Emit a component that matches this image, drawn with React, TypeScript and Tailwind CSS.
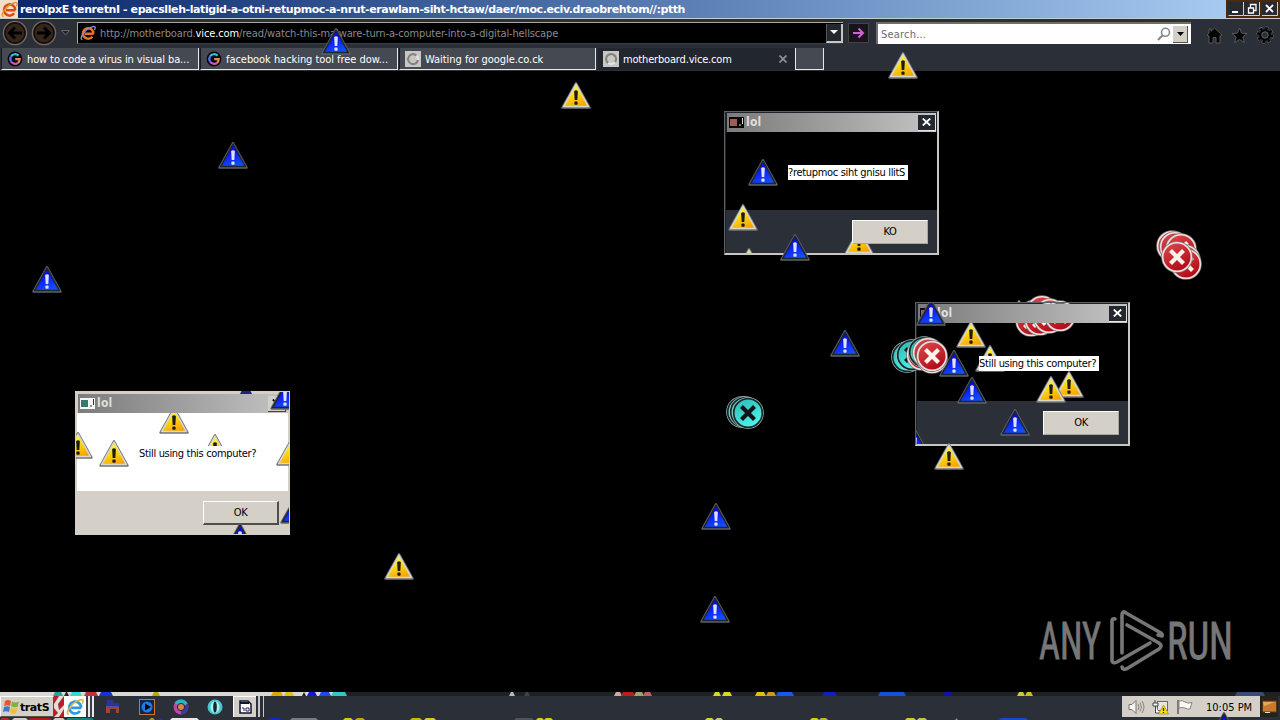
import { useId, type ReactNode } from 'react';
import clsx from 'clsx';

type IconKind = 'yellow' | 'blue' | 'red' | 'teal';
type Spot = { kind: IconKind; x: number; y: number };
type Tip = { x: number; w: number; color: string };

const triangleColors = {
    yellow: { from: '#fff21a', to: '#f7a400', edge: '#dad8c8', outer: '#77767a', mark: '#1c190d' },
    blue: { from: '#0808f8', to: '#1450fa', edge: '#20262f', outer: '#5c6069', mark: '#dfe3ff' },
};

const discColors = {
    red: { from: '#e04b50', to: '#b10d18', edge: '#f2dede', outer: '#777', mark: '#fdf3ea' },
    teal: { from: '#2cb4b0', to: '#4cf2e8', edge: '#152424', outer: '#a2b9b9', mark: '#101418' },
};

// Icons are placed by their center point
function StrayIcon({ kind, x, y }: Spot) {
    const id = useId();
    if (kind === 'yellow' || kind === 'blue') {
        const c = triangleColors[kind];
        return (
            <svg className="absolute" style={{ left: x - 15, top: y - 13 }} width="30" height="28" viewBox="0 0 30 28">
                <defs>
                    <linearGradient id={id} x1="0.3" y1="0.25" x2="0.6" y2="1">
                        <stop offset="0" stopColor={c.from} />
                        <stop offset="1" stopColor={c.to} />
                    </linearGradient>
                </defs>
                <path d="M15 1.3 L28.5 25.6 H1.5 Z" fill={c.outer} stroke={c.outer} strokeWidth="2.4" strokeLinejoin="round" />
                <path d="M15 2.2 L27.4 24.6 H2.6 Z" fill={`url(#${id})`} stroke={c.edge} strokeWidth="1.5" strokeLinejoin="round" />
                <path d="M13.1 9 Q15 7.6 16.9 9 L16.3 18 H13.7 Z" fill={c.mark} />
                <rect x="13.4" y="19.6" width="3.2" height="3.2" rx="0.8" fill={c.mark} />
            </svg>
        );
    }
    const c = discColors[kind];
    return (
        <svg className="absolute" style={{ left: x - 16, top: y - 17 }} width="32" height="34" viewBox="0 0 32 34">
            <defs>
                <linearGradient id={id} x1="0" y1="0" x2="0.5" y2="1">
                    <stop offset="0" stopColor={c.from} />
                    <stop offset="1" stopColor={c.to} />
                </linearGradient>
            </defs>
            <circle cx="16" cy="17" r="15.8" fill={c.outer} />
            <circle cx="16" cy="17" r="14.3" fill={`url(#${id})`} stroke={c.edge} strokeWidth="1.6" />
            <path d="M9.5 10.5 L22.5 23.5 M22.5 10.5 L9.5 23.5" stroke={c.mark} strokeWidth="4.2" />
        </svg>
    );
}

function Icons({ spots }: { spots: Spot[] }) {
    return (
        <>
            {spots.map((s, i) => (
                <StrayIcon key={i} {...s} />
            ))}
        </>
    );
}

const desktopIcons: Spot[] = [
    { kind: 'yellow', x: 576, y: 95 },
    { kind: 'yellow', x: 903, y: 65 },
    { kind: 'yellow', x: 399, y: 566 },
    { kind: 'blue', x: 336, y: 41 },
    { kind: 'blue', x: 233, y: 155 },
    { kind: 'blue', x: 47, y: 279 },
    { kind: 'blue', x: 845, y: 343 },
    { kind: 'blue', x: 716, y: 516 },
    { kind: 'blue', x: 715, y: 609 },
    { kind: 'yellow', x: 1019, y: 313 },
    { kind: 'red', x: 1035, y: 315 },
    { kind: 'red', x: 1042, y: 311 },
    { kind: 'red', x: 1050, y: 314 },
    { kind: 'red', x: 1060, y: 316 },
];

const topIcons: Spot[] = [
    { kind: 'blue', x: 795, y: 247 },
    { kind: 'yellow', x: 949, y: 456 },
    { kind: 'teal', x: 907, y: 357 },
    { kind: 'teal', x: 912, y: 355 },
    { kind: 'red', x: 922, y: 355 },
    { kind: 'teal', x: 924, y: 352 },
    { kind: 'red', x: 928, y: 353 },
    { kind: 'red', x: 932, y: 358 },
    { kind: 'red', x: 932, y: 356 },
    { kind: 'teal', x: 742, y: 412 },
    { kind: 'teal', x: 745, y: 412 },
    { kind: 'teal', x: 748, y: 413 },
    { kind: 'red', x: 1172, y: 246 },
    { kind: 'red', x: 1175, y: 247 },
    { kind: 'red', x: 1181, y: 249 },
    { kind: 'red', x: 1185, y: 260 },
    { kind: 'red', x: 1186, y: 264 },
    { kind: 'red', x: 1177, y: 257 },
];

// Only slivers of the icons show above and below the taskbar
const taskbarTopTips: Tip[] = [
    { x: 53, w: 10, color: '#22a5a0' },
    { x: 64, w: 5, color: '#1c2c2c' },
    { x: 70, w: 12, color: '#38d8d0' },
    { x: 84, w: 14, color: '#bd3338' },
    { x: 99, w: 14, color: '#1532d8' },
    { x: 152, w: 8, color: '#b8a410' },
    { x: 271, w: 12, color: '#d8a808' },
    { x: 284, w: 10, color: '#e0c010' },
    { x: 302, w: 4, color: '#202020' },
    { x: 307, w: 10, color: '#1018d8' },
    { x: 319, w: 12, color: '#2048f0' },
    { x: 331, w: 16, color: '#32c8c4' },
    { x: 509, w: 6, color: '#b8b8b0' },
    { x: 524, w: 6, color: '#41424a' },
    { x: 614, w: 8, color: '#c9aaa4' },
    { x: 621, w: 14, color: '#b82020' },
    { x: 634, w: 10, color: '#a8a068' },
    { x: 643, w: 9, color: '#c06058' },
    { x: 713, w: 8, color: '#d8d820' },
    { x: 722, w: 10, color: '#d8d820' },
    { x: 755, w: 11, color: '#e0c000' },
    { x: 766, w: 10, color: '#d09820' },
    { x: 776, w: 18, color: '#1858f0' },
    { x: 822, w: 15, color: '#1020c0' },
    { x: 878, w: 28, color: '#1450d8' },
    { x: 943, w: 10, color: '#1010b8' },
    { x: 1017, w: 8, color: '#d0c838' },
    { x: 1025, w: 8, color: '#c8c020' },
    { x: 1235, w: 30, color: '#3b4c74' },
];

const taskbarBottomTips: Tip[] = [
    { x: 0, w: 10, color: '#b82830' },
    { x: 12, w: 16, color: '#d8c8c4' },
    { x: 28, w: 24, color: '#b01820' },
    { x: 53, w: 12, color: '#d8c8c4' },
    { x: 66, w: 28, color: '#18807c' },
    { x: 149, w: 6, color: '#a89820' },
    { x: 158, w: 5, color: '#2828a0' },
    { x: 170, w: 29, color: '#e8e8e8' },
    { x: 268, w: 14, color: '#1028c8' },
    { x: 290, w: 28, color: '#777b83' },
    { x: 343, w: 10, color: '#d8c810' },
    { x: 355, w: 10, color: '#c8a010' },
    { x: 410, w: 12, color: '#d8b000' },
    { x: 424, w: 12, color: '#d8c820' },
    { x: 514, w: 20, color: '#50535a' },
    { x: 536, w: 8, color: '#d8d010' },
    { x: 544, w: 9, color: '#d8d010' },
    { x: 705, w: 9, color: '#d8d030' },
    { x: 715, w: 8, color: '#c8c878' },
    { x: 810, w: 9, color: '#d8d010' },
    { x: 819, w: 9, color: '#c8b820' },
    { x: 905, w: 11, color: '#d8c828' },
    { x: 917, w: 10, color: '#c8c060' },
    { x: 955, w: 3, color: '#90939a' },
    { x: 999, w: 29, color: '#1a48c8' },
];

function TipStrip({ tips, height }: { tips: Tip[]; height: number }) {
    return (
        <svg className="absolute left-0 top-0" width="1280" height={height} viewBox={`0 0 1280 ${height}`}>
            {tips.map(t => (
                <path key={t.x} d={`M${t.x} ${height} L${t.x + 2} 0 H${t.x + t.w - 2} L${t.x + t.w} ${height} Z`} fill={t.color} />
            ))}
        </svg>
    );
}

function InternetExplorerIcon({ size, color, ring }: { size: number; color: string; ring: string }) {
    return (
        <svg width={size} height={size} viewBox="0 0 16 16" fill="none">
            <path d="M13.6 8.7 H4.6 M13.4 8.7 A5.3 5.3 0 1 0 12.4 11.6" stroke={color} strokeWidth="2.4" />
            <path d="M2.4 14.6 C-1.5 14 5 3.5 13 1.6 C16 1 15.4 3.4 14.4 5" stroke={ring} strokeWidth="1.4" />
        </svg>
    );
}

function GoogleIcon() {
    return (
        <svg width="16" height="16" viewBox="0 0 16 16" fill="none" className="shrink-0">
            <circle cx="8" cy="8" r="7.4" fill="#06070b" />
            <path d="M11.5 4.6 A4.8 4.8 0 0 0 4 5.5" stroke="#26c5e8" strokeWidth="2.2" />
            <path d="M4 5.5 A4.8 4.8 0 0 0 4 10.5" stroke="#4f73ff" strokeWidth="2.2" />
            <path d="M4 10.5 A4.8 4.8 0 0 0 11 11.8" stroke="#cf52cb" strokeWidth="2.2" />
            <path d="M11 11.8 A4.8 4.8 0 0 0 12.7 8.2 H8.2" stroke="#e8855f" strokeWidth="2.2" />
        </svg>
    );
}

function SpinnerIcon({ full }: { full?: boolean }) {
    return (
        <svg width="16" height="16" viewBox="0 0 16 16" fill="none" className="shrink-0">
            <rect width="16" height="16" fill="#c9c7c3" />
            <circle cx="8" cy="8" r="5" stroke="#e8e6e2" strokeWidth="2" />
            <path d={full ? 'M5 12 A5 5 0 1 1 12 11' : 'M11.5 4.5 A5 5 0 1 0 13 9'} stroke="#85827f" strokeWidth="2.2" />
        </svg>
    );
}

function NavButton({ back }: { back?: boolean }) {
    return (
        <svg width="26" height="26" viewBox="0 0 26 26" fill="none">
            <circle cx="13" cy="13" r="11.6" fill="#1b1512" stroke="#74675e" strokeWidth="1.4" />
            <circle cx="13" cy="13" r="9.8" fill="#35261d" stroke="#100c0a" />
            <path
                d={back ? 'M20 13 H8 M13 7.5 L7.5 13 L13 18.5' : 'M6 13 H18 M13 7.5 L18.5 13 L13 18.5'}
                stroke="#000"
                strokeWidth="3"
            />
        </svg>
    );
}

function TitleBar() {
    return (
        <div className="h-[19px] flex items-center shrink-0 border-b border-[#c8cbd0] bg-linear-to-r from-[#0a246a] to-[#a6caf0] to-[96%]">
            <div className="w-[18px] h-[18px] bg-[#f0dfc6] flex items-center justify-center">
                <InternetExplorerIcon size={17} color="#d84c10" ring="#e8952c" />
            </div>
            <span className="pl-[2px] pt-px text-[11px] leading-[17px] font-bold text-white tracking-[-0.41px] whitespace-nowrap font-['DejaVu_Sans',sans-serif] [font-stretch:normal]">
                rerolpxE tenretnI - epacslleh-latigid-a-otni-retupmoc-a-nrut-erawlam-siht-hctaw/daer/moc.eciv.draobrehtom//:ptth
            </span>
            <div className="ml-auto h-[18px] w-[54px] bg-[#4a2a0c] flex items-center pl-[2px]">
                <svg width="50" height="14" viewBox="0 0 50 14" fill="none">
                    <path d="M0 0 H15 V14 H0Z M16 0 H31 V14 H16Z M34 0 H49 V14 H34Z" fill="#262a32" />
                    <path d="M0.5 13.5 H15.5 V0 M16 13.5 H31.5 V0 M34 13.5 H49.5 V0" stroke="#d4d0c8" />
                    <path d="M4 10 H10" stroke="#fff" strokeWidth="2" />
                    <path d="M20.5 6 H25.5 V11 H20.5Z M22.5 5.5 V2.5 H28 V8.5 H26" stroke="#fff" strokeWidth="1.3" />
                    <path d="M38 3 L45 10 M45 3 L38 10" stroke="#fff" strokeWidth="1.8" />
                </svg>
            </div>
        </div>
    );
}

function AddressBar() {
    return (
        <div className="h-[28px] flex items-center shrink-0">
            <div className="flex items-center pl-[2px] gap-[3px]">
                <NavButton back />
                <NavButton />
            </div>
            <svg width="9" height="6" viewBox="0 0 9 6" className="ml-1 mr-[7px]">
                <path d="M0.5 0.5 H8.5 L4.5 5 Z" fill="#20242b" stroke="#666" />
            </svg>
            <div className="w-[766px] h-[22px] bg-black border-t border-l border-[#aaa59e] border-b border-b-[#3b4047] flex items-center pl-[2px]">
                <InternetExplorerIcon size={16} color="#e87322" ring="#8a86d8" />
                <span className="pl-[4px] pt-[3px] text-[11px] text-[#8a8a8a] whitespace-nowrap tracking-[-0.13px]">
                    http://motherboard.<span className="text-white">vice.com</span>/read/watch-this-malware-turn-a-computer-into-a-digital-hellscape
                </span>
                <div className="ml-auto w-[17px] h-[19px] bg-[#23282f] border-r-2 border-b-2 border-[#c9c7c3] border-l border-l-[#555] flex items-center justify-center">
                    <svg width="8" height="4" viewBox="0 0 8 4"><path d="M0 0 H8 L4 4Z" fill="#fff" /></svg>
                </div>
            </div>
            <div className="ml-[5px] w-[21px] h-[20px] bg-[#17151b] border border-[#45433f] flex items-center justify-center">
                <svg width="13" height="12" viewBox="0 0 13 12" fill="none">
                    <path d="M1 6 H11 M6.5 1.5 L11 6 L6.5 10.5" stroke="#cf62d8" strokeWidth="2" />
                </svg>
            </div>
            <div className="ml-[7px] w-[315px] h-[22px] bg-white border-t-2 border-l-2 border-[#706e6a] flex items-center pl-[3px] pr-[3px]">
                <span className="pt-[2px] text-[11px] text-[#6d6d6d] tracking-[0.2px]">Search...</span>
                <svg width="14" height="14" viewBox="0 0 14 14" fill="none" className="ml-auto mr-[2px]">
                    <circle cx="8.5" cy="5.3" r="4" stroke="#85888c" strokeWidth="1.6" />
                    <path d="M5.6 8.2 L1 13" stroke="#85888c" strokeWidth="2" />
                </svg>
                <div className="w-[15px] h-[17px] bg-[#d4d0c8] border-r border-b border-[#55524e] flex items-center justify-center">
                    <svg width="7" height="4" viewBox="0 0 7 4"><path d="M0 0 H7 L3.5 4Z" fill="#000" /></svg>
                </div>
            </div>
            <div className="ml-[15px] flex items-center gap-[8px] pt-[4px]">
                <svg width="17" height="17" viewBox="0 0 17 17">
                    <path d="M8.5 1 L16 8 L14.8 9.2 L14 8.5 V16 H10 V10.5 H7 V16 H3 V8.5 L2.2 9.2 L1 8 L3 6 V2 H5 V4.3 Z" fill="#050505" stroke="#676767" strokeWidth="0.8" />
                </svg>
                <svg width="17" height="17" viewBox="0 0 17 17">
                    <path d="M8.5 1 L10.6 6.2 L16 6.5 L11.8 10 L13.3 15.5 L8.5 12.4 L3.7 15.5 L5.2 10 L1 6.5 L6.4 6.2 Z" fill="#050505" stroke="#676767" strokeWidth="0.8" />
                </svg>
                <svg width="18" height="18" viewBox="0 0 18 18" fill="none">
                    <circle cx="9" cy="9" r="6.6" stroke="#777" strokeWidth="4" strokeDasharray="2.9 2.28" />
                    <circle cx="9" cy="9" r="6.6" stroke="#050505" strokeWidth="3" strokeDasharray="2.6 2.58" />
                    <circle cx="9" cy="9" r="4.6" stroke="#050505" strokeWidth="2.4" />
                    <circle cx="9" cy="9" r="3.2" stroke="#777" strokeWidth="0.7" />
                </svg>
            </div>
        </div>
    );
}

function Tab({ icon, label, active, className }: { icon: ReactNode; label: string; active?: boolean; className: string }) {
    return (
        <div
            className={clsx(
                'h-[22px] flex items-center pl-[5px] pr-[8px] gap-[4px] text-[11px] text-white whitespace-nowrap',
                active ? 'bg-[#22262e]' : 'bg-[#454951] border-r border-b border-[#e8e8e8] border-l border-l-[#17191e]',
                className
            )}
        >
            {icon}
            <span className={active ? 'pt-[3px]' : 'pt-[4px]'}>{label}</span>
            {active && (
                <svg width="8" height="8" viewBox="0 0 8 8" className="ml-auto">
                    <path d="M0.5 0.5 L7.5 7.5 M7.5 0.5 L0.5 7.5" stroke="#8c8f94" strokeWidth="1.7" />
                </svg>
            )}
        </div>
    );
}

function TabBar() {
    return (
        <div className="h-[24px] flex items-start pt-px pl-px shrink-0">
            <Tab className="w-[198px] tracking-[-0.11px]" icon={<GoogleIcon />} label="how to code a virus in visual ba..." />
            <Tab className="w-[198px] ml-px tracking-[-0.05px]" icon={<GoogleIcon />} label="facebook hacking tool free dow..." />
            <Tab className="w-[197px] ml-px tracking-[-0.04px]" icon={<SpinnerIcon />} label="Waiting for google.co.ck" />
            <Tab className="w-[197px] ml-[2px] tracking-[-0.17px]" icon={<SpinnerIcon full />} label="motherboard.vice.com" active />
            <div className="w-[29px] h-[22px] bg-[#454951] border-l border-r border-b border-[#e8e8e8]" />
        </div>
    );
}

type DialogProps = {
    place: string;
    text: string;
    button: string;
    light?: boolean;
    under?: Spot[];
    over?: Spot[];
};

// Spots inside a dialog are relative to the frame and get cut off by it
function Dialog({ place, text, button, light, under = [], over = [] }: DialogProps) {
    return (
        <div
            className={clsx(
                'absolute w-[215px] h-[144px] overflow-hidden flex flex-col border pl-px',
                light ? 'bg-[#d4d0c8] border-[#d4d0c8] pt-[2px] pr-px' : 'bg-[#202329] border-[#5d6065] border-r-2 border-b-2 border-r-[#c9c7c3] border-b-[#c9c7c3] pt-px',
                place
            )}
        >
            <div className={clsx('h-[78px] mt-[19px] shrink-0', light ? 'bg-white' : 'bg-black')} />
            <div className={clsx('flex-1', light ? 'bg-[#d4d0c8]' : 'bg-[#2b2f37]')} />
            <Icons spots={under} />
            <div
                className={clsx(
                    'absolute left-[2px] right-px h-[19px] flex items-center bg-linear-to-r from-[#7c7c7c] to-[#c4c4c4] pl-[2px]',
                    light ? 'top-[2px]' : 'top-px'
                )}
            >
                <svg width="15" height="11" viewBox="0 0 15 11">
                    <rect width="15" height="11" fill={light ? '#f5f5f5' : '#080808'} />
                    <rect x="1" y="2" width="7" height="7" fill={light ? '#32796f' : '#a05b55'} />
                    <path d="M10 8 H12 M13.5 1 V7" stroke={light ? '#333' : '#ddd'} strokeWidth="1" />
                </svg>
                <span className="pl-[2px] text-[12px] leading-[19px] font-bold text-[#e0ded9] tracking-[0.2px]">lol</span>
                <div
                    className={clsx(
                        'ml-auto w-[18px] h-[16px] flex items-center justify-center border-r border-b',
                        light ? 'mr-[2px] bg-[#d4d0c8] border-[#444]' : 'bg-[#23272f] border-[#e5e5e5]'
                    )}
                >
                    <svg width="9" height="8" viewBox="0 0 9 8">
                        <path d="M0.8 0.5 L8.2 7.5 M8.2 0.5 L0.8 7.5" stroke={light ? '#000' : '#fff'} strokeWidth="1.8" />
                    </svg>
                </div>
            </div>
            <div
                className={clsx(
                    'absolute left-[63px] w-[120px] h-[15px] bg-white text-[11px] leading-[16px] text-black whitespace-nowrap tracking-[-0.32px]',
                    light ? 'top-[54px]' : 'top-[53px]'
                )}
            >
                {text}
            </div>
            <div
                className={clsx(
                    'absolute left-[127px] w-[76px] h-[24px] pt-px flex items-center justify-center bg-[#d4d0c8] border-t border-l border-white border-r border-b text-[11px] text-black tracking-[-0.3px]',
                    light ? 'top-[109px] border-r-2 border-b-2 border-r-[#504e4a] border-b-[#504e4a]' : 'top-[108px] border-r-[#aaa7a0] border-b-[#aaa7a0]'
                )}
            >
                {button}
            </div>
            <Icons spots={over} />
        </div>
    );
}

function Watermark() {
    return (
        <svg className="absolute left-[1036px] top-[606px] overflow-visible" width="206" height="70" viewBox="0 0 206 70" fill="none">
            <g fill="#777" stroke="#777" strokeWidth="0.8" fontFamily="Roboto" fontSize="51.5">
                <text x="3" y="53" textLength="62" lengthAdjust="spacingAndGlyphs">ANY</text>
                <text x="131" y="53" textLength="66" lengthAdjust="spacingAndGlyphs">RUN</text>
            </g>
            <g stroke="#777" strokeWidth="3.6" strokeLinejoin="round" strokeLinecap="round">
                <path d="M86 47 V9 Q86 4 90 7 L125 27 Q127 29 126 30 L122 29" />
                <path d="M79 13 Q76 12 76 15 V55 Q77 58 81 56 L114 37" />
                <path d="M91 19 L123 37 Q127 40 123 43 L92 62 Q87 65 86 61" />
            </g>
        </svg>
    );
}

function Taskbar() {
    return (
        <div className="h-[29px] shrink-0 flex flex-col bg-[#2b2f37]">
            <div className="relative h-[5px] shrink-0 overflow-hidden bg-[#1d2025] border-t border-black">
                <div className="w-[345px] h-[4px] bg-[#d9d7d1]" />
                <TipStrip tips={taskbarTopTips} height={4} />
            </div>
            <div className="h-[21px] flex items-center shrink-0">
                <div className="w-[54px] h-[21px] shrink-0 bg-[#d4d0c8] border border-white border-r-[#55524e] border-b-[#55524e] flex items-center pl-[2px]">
                    <svg width="17" height="16" viewBox="0 0 17 16">
                        <path d="M2 2 Q5 0 8 2 L7 7 Q4 5.5 1 7Z" fill="#e4582a" />
                        <path d="M9 2.5 Q12 4.5 16 2.5 L14.5 8 Q11 9 8 7.2Z" fill="#7db343" />
                        <path d="M1 8 Q4 6.5 7 8 L6 13 Q3 11.5 0 13Z" fill="#3b79cf" />
                        <path d="M8 8.5 Q11 10.5 14.4 9 L13 14 Q10 15.5 7 13.5Z" fill="#f2be32" />
                    </svg>
                    <span className="pt-[2px] text-[11px] leading-[19px] font-bold text-black tracking-[-0.42px] font-['DejaVu_Sans',sans-serif] [font-stretch:normal]">tratS</span>
                </div>
                <svg width="10" height="21" viewBox="0 0 10 21" className="shrink-0">
                    <rect width="10" height="21" fill="#e4dcd8" />
                    <path d="M0 0 H5 L0 8Z M10 0 V9 L5 14 L4 8Z M0 12 L4 17 L0 21Z M10 13 V21 H5Z" fill="#b3202a" />
                </svg>
                <div className="w-[22px] h-[21px] shrink-0 bg-white flex items-center justify-center">
                    <InternetExplorerIcon size={18} color="#2b9be3" ring="#e2b23c" />
                </div>
                <div className="w-[4px] h-[21px] shrink-0 bg-[#3a3d43] border-r-2 border-[#e8e8e8]" />
                <div className="w-[4px] h-[21px] shrink-0 bg-[#3a3d43] border-r-2 border-[#e8e8e8]" />
                <svg width="16" height="15" viewBox="0 0 16 15" className="ml-[11px]">
                    <path d="M2 1 H8 L9 4 H14 V7 H1Z" fill="#29378f" />
                    <path d="M1 7 H14 V14 H11 V10 H5 V14 H1Z" fill="#a1452f" />
                    <path d="M2 8 H14" stroke="#3157d0" strokeWidth="1.6" />
                </svg>
                <svg width="16" height="16" viewBox="0 0 16 16" className="ml-[18px]">
                    <rect x="0.5" y="0.5" width="15" height="15" fill="#0c274a" stroke="#d6722b" />
                    <circle cx="8" cy="8" r="5.5" fill="#1c7ce0" />
                    <path d="M6 4.5 L12 8 L6 11.5Z" fill="#080808" />
                </svg>
                <svg width="16" height="16" viewBox="0 0 16 16" className="ml-[18px]">
                    <circle cx="8" cy="8" r="7.5" fill="#b847a8" />
                    <path d="M8 8 L1.5 4 A7.5 7.5 0 0 1 14.5 4.5Z" fill="#27b7c6" />
                    <path d="M8 8 L14.8 5 A7.5 7.5 0 0 1 8 15.5Z" fill="#363aa4" />
                    <circle cx="8" cy="8" r="3.6" fill="#d5864a" stroke="#26242b" />
                </svg>
                <svg width="16" height="16" viewBox="0 0 16 16" className="ml-[18px]">
                    <circle cx="8" cy="8" r="7.5" fill="#45c8cd" />
                    <ellipse cx="8" cy="8" rx="4.5" ry="6" fill="#a9f0ef" />
                    <ellipse cx="8" cy="8" rx="1.8" ry="5.5" fill="#102b30" />
                </svg>
                <div className="ml-[10px] w-[23px] h-[21px] shrink-0 bg-[#d4d0c8] border-l border-t border-white flex items-center justify-center">
                    <svg width="13" height="14" viewBox="0 0 13 14" fill="none">
                        <path d="M1 1 H9 L12 4 V13 H1Z" fill="#fff" stroke="#111630" strokeWidth="1.5" />
                        <path d="M1 3 H10" stroke="#111630" strokeWidth="2" />
                        <path d="M3 8 H5 V11 M7 8 H10 V11 H7Z" stroke="#27275a" />
                    </svg>
                </div>
                <div className="w-[4px] h-[21px] shrink-0 border-r-2 border-[#c9c7c3]" />
                <div className="w-[4px] h-[21px] shrink-0 border-r border-[#c9c7c3]" />
                <div className="ml-auto mr-[2px] h-[21px] w-[156px] bg-[#d4d0c8] flex items-center pl-[6px]">
                    <svg width="17" height="16" viewBox="0 0 17 16" fill="none">
                        <path d="M1 5.5 H4 L8 1.5 V14.5 L4 10.5 H1Z" fill="#f6f6f6" stroke="#77756f" />
                        <path d="M10 5 Q12 8 10 11 M12 3.5 Q15 8 12 12.5 M14 2 Q18 8 14 14" stroke="#88857e" />
                    </svg>
                    <svg width="17" height="16" viewBox="0 0 17 16" fill="none" className="ml-[7px]">
                        <rect x="5.5" y="2.5" width="10" height="9" fill="#e8e6e0" stroke="#6d6a65" />
                        <path d="M3 1 V4 M1 4 H6 V7 H1Z M3.5 7 V14 H7" fill="#fff" stroke="#444" />
                        <path d="M11.5 6 L16.5 15 H6.5Z" fill="#ffdf18" stroke="#a77d13" strokeWidth="0.7" />
                        <path d="M11.5 9 V12 M11.5 13 V14" stroke="#222" strokeWidth="1.3" />
                    </svg>
                    <svg width="17" height="16" viewBox="0 0 17 16" fill="none" className="ml-[7px]">
                        <path d="M2 1 V15" stroke="#66635e" strokeWidth="1.6" />
                        <path d="M3 2 Q7 1 9 3 Q12 5 16 3.5 L14 10 Q11 10.5 9 9 Q6 8 3 9Z" fill="#faf9f6" stroke="#88857e" />
                    </svg>
                    <span className="ml-[13px] pt-[3px] text-[11px] text-black whitespace-nowrap">10:05 PM</span>
                    <div className="ml-auto w-[18px] h-[21px] bg-[#25221e] flex items-center justify-center">
                        <svg width="15" height="14" viewBox="0 0 15 14">
                            <rect x="0.5" y="1" width="14" height="11" fill="#c8792c" stroke="#603610" />
                            <path d="M1 2 L13 2 L2 6Z" fill="#e8a85c" />
                            <path d="M3 12.5 H8" stroke="#ddd" />
                        </svg>
                    </div>
                </div>
            </div>
            <div className="relative h-[3px] shrink-0 overflow-hidden">
                <div className="absolute left-0 top-px">
                    <TipStrip tips={taskbarBottomTips} height={2} />
                </div>
            </div>
        </div>
    );
}

export default function App() {
    return (
        <div className="relative w-[1280px] h-[720px] overflow-hidden bg-black flex flex-col font-['DejaVu_Sans_Condensed','DejaVu_Sans',sans-serif] [font-stretch:condensed]">
            <div className="h-[71px] shrink-0 flex flex-col bg-[#2b2f37]">
                <TitleBar />
                <AddressBar />
                <TabBar />
            </div>
            <main className="flex-1" />
            <Taskbar />

            <Icons spots={desktopIcons} />
            <Dialog
                place="left-[724px] top-[111px]"
                text="?retupmoc siht gnisu llitS"
                button="KO"
                under={[
                    { kind: 'blue', x: 38, y: 60 },
                    { kind: 'yellow', x: 18, y: 105 },
                    { kind: 'yellow', x: 134, y: 129 },
                    { kind: 'yellow', x: 24, y: 149 },
                ]}
            />
            <Dialog
                place="left-[915px] top-[302px]"
                text="Still using this computer?"
                button="OK"
                under={[
                    { kind: 'red', x: 115, y: 18 },
                    { kind: 'red', x: 124, y: 17 },
                    { kind: 'red', x: 133, y: 15 },
                    { kind: 'red', x: 144, y: 13 },
                    { kind: 'yellow', x: 55, y: 31 },
                    { kind: 'yellow', x: 74, y: 55 },
                    { kind: 'blue', x: 38, y: 60 },
                    { kind: 'blue', x: 56, y: 87 },
                    { kind: 'yellow', x: 153, y: 81 },
                    { kind: 'yellow', x: 135, y: 86 },
                    { kind: 'blue', x: 99, y: 119 },
                ]}
                over={[
                    { kind: 'blue', x: 15, y: 9 },
                    { kind: 'blue', x: -1, y: 139 },
                ]}
            />
            <Dialog
                light
                place="left-[75px] top-[391px]"
                text="Still using this computer?"
                button="OK"
                under={[
                    { kind: 'yellow', x: 98, y: 28 },
                    { kind: 'yellow', x: 38, y: 61 },
                    { kind: 'yellow', x: 2, y: 53 },
                    { kind: 'yellow', x: 139, y: 55 },
                    { kind: 'yellow', x: 215, y: 60 },
                ]}
                over={[
                    { kind: 'blue', x: 209, y: 4 },
                    { kind: 'blue', x: 219, y: 118 },
                    { kind: 'blue', x: 164, y: 144 },
                ]}
            />
            <svg className="absolute left-[240px] top-[391px]" width="12" height="3" viewBox="0 0 12 3">
                <path d="M1.5 0 H10.5 L12 3 H0Z" fill="#1d2480" />
            </svg>
            <Icons spots={topIcons} />
            <div className="absolute left-[1208px] top-[711px] w-[32px] h-[9px] overflow-hidden">
                <Icons spots={[{ kind: 'blue', x: 16, y: 14 }]} />
            </div>
            <Watermark />
        </div>
    );
}
